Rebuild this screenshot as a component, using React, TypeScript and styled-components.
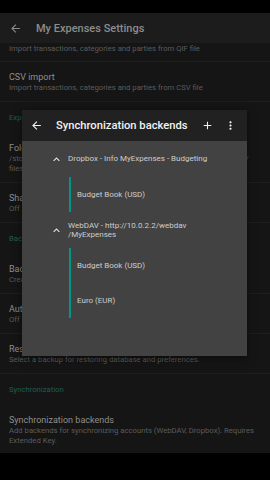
import styled, { createGlobalStyle } from 'styled-components';

const GlobalStyle = createGlobalStyle`
html, body {
    margin: 0;
    padding: 0;
    background: #000;
}
body {
    font-family: Roboto, "Noto Sans", sans-serif;
}
`;

const ArrowBack = ({ color }: { color: string }) => (
    <svg width="13" height="13" viewBox="0 0 24 24">
        <path fill={color} d="M20 11H7.83l5.59-5.59L12 4l-8 8 8 8 1.41-1.41L7.83 13H20v-2z" />
    </svg>
);

const AddIcon = () => (
    <svg width="13" height="13" viewBox="0 0 24 24">
        <path fill="#f2f2f2" d="M19 13h-6v6h-2v-6H5v-2h6V5h2v6h6v2z" />
    </svg>
);

const MoreIcon = () => (
    <svg width="13" height="13" viewBox="0 0 24 24">
        <path fill="#f2f2f2" d="M12 8c1.1 0 2-.9 2-2s-.9-2-2-2-2 .9-2 2 .9 2 2 2zm0 2c-1.1 0-2 .9-2 2s.9 2 2 2 2-.9 2-2-.9-2-2-2zm0 6c-1.1 0-2 .9-2 2s.9 2 2 2 2-.9 2-2-.9-2-2-2z" />
    </svg>
);

const ExpandLess = () => (
    <svg width="13" height="13" viewBox="0 0 24 24">
        <path fill="#e6e6e6" d="M12 8l-6 6 1.41 1.41L12 10.83l4.59 4.58L18 14z" />
    </svg>
);

type Pref = { title?: string; summary?: string[] };

const topPrefs: (Pref | { category: string })[] = [
    { summary: ['Import transactions, categories and parties from QIF file'] },
    { title: 'CSV import', summary: ['Import transactions, categories and parties from CSV file'] },
    { category: 'Export' },
    { title: 'Folder', summary: ['/storage/emulated/0/Android/data/org.totschnig.myexpenses.debug/', 'files'] },
    { title: 'Share', summary: ['Off'] },
    { category: 'Backup / Restore' },
    { title: 'Backup', summary: ['Create a backup of database and preferences'] },
    { title: 'Auto backup', summary: ['Off'] },
    { title: 'Restore', summary: ['Select a backup for restoring database and preferences.'] },
    { category: 'Synchronization' },
];

const backends = [
    { name: ['Dropbox - Info MyExpenses - Budgeting'], accounts: ['Budget Book (USD)'] },
    { name: ['WebDAV - http://10.0.2.2/webdav', '/MyExpenses'], accounts: ['Budget Book (USD)', 'Euro (EUR)'] },
];

export default function App() {
    return (
        <>
            <GlobalStyle />
            <Screen>
                <StatusBar />
                <Toolbar>
                    <ArrowBack color="#8a8a8a" />
                    <ToolbarTitle>My Expenses Settings</ToolbarTitle>
                </Toolbar>
                <PrefList>
                    {topPrefs.map((p, i) =>
                        'category' in p ? (
                            <Category key={i}>{p.category}</Category>
                        ) : (
                            <PrefRow key={i} $partial={!p.title}>
                                {p.title && <PrefTitle>{p.title}</PrefTitle>}
                                {p.summary?.map((s, j) => <PrefSummary key={j}>{s}</PrefSummary>)}
                            </PrefRow>
                        )
                    )}
                    <PrefRow $last>
                        <PrefTitle>Synchronization backends</PrefTitle>
                        <PrefSummary $wrap>
                            Add backends for synchronizing accounts (WebDAV, Dropbox). Requires Extended Key.
                        </PrefSummary>
                    </PrefRow>
                </PrefList>
                <NavBar />

                <Dialog>
                    <DialogBar>
                        <IconBox $width={26}><ArrowBack color="#f2f2f2" /></IconBox>
                        <DialogTitle>Synchronization backends</DialogTitle>
                        <IconBox $width={23}><AddIcon /></IconBox>
                        <IconBox $width={23}><MoreIcon /></IconBox>
                    </DialogBar>
                    <DialogBody>
                        {backends.map((b, i) => (
                            <div key={i}>
                                <GroupHeader>
                                    <ExpandLess />
                                    <GroupName>
                                        {b.name.map((n, j) => <div key={j}>{n}</div>)}
                                    </GroupName>
                                </GroupHeader>
                                <AccountList>
                                    {b.accounts.map((a, j) => <Account key={j}>{a}</Account>)}
                                </AccountList>
                            </div>
                        ))}
                    </DialogBody>
                </Dialog>
            </Screen>
        </>
    );
}

const Screen = styled.div`
position: relative;
width: 270px;
height: 480px;
display: flex;
flex-direction: column;
overflow: hidden;
background: #151515;
`;

const StatusBar = styled.div`
flex-shrink: 0;
height: 13px;
background: #000;
`;

const Toolbar = styled.div`
flex-shrink: 0;
height: 30px;
display: flex;
align-items: center;
gap: 14px;
padding-left: 9px;
background: #1c1c1c;
`;

const ToolbarTitle = styled.div`
color: #8c8c8c;
font-size: 11px;
font-weight: 500;
`;

const PrefList = styled.div`
flex: 1;
min-height: 0;
display: flex;
flex-direction: column;
overflow: hidden;
`;

const PrefRow = styled.div<{ $partial?: boolean; $last?: boolean }>`
flex-shrink: 0;
padding: ${p => (p.$partial ? '1px 9px 7px' : '9px 9px 8px')};
border-bottom: 1px solid ${p => (p.$last ? 'transparent' : '#1e1e1e')};
`;

const PrefTitle = styled.div`
color: #8e8e8e;
font-size: 9px;
line-height: 12px;
white-space: nowrap;
`;

const PrefSummary = styled.div<{ $wrap?: boolean }>`
color: #5c5c5c;
font-size: 7.7px;
line-height: 10px;
white-space: ${p => (p.$wrap ? 'normal' : 'nowrap')};
`;

const Category = styled.div`
flex-shrink: 0;
height: 31px;
display: flex;
align-items: center;
padding-left: 9px;
color: #1f5d54;
font-size: 7.7px;
`;

const NavBar = styled.div`
flex-shrink: 0;
height: 27px;
background: #000;
`;

const Dialog = styled.div`
position: absolute;
left: 22px;
top: 110px;
width: 225px;
height: 246px;
display: flex;
flex-direction: column;
background: #424242;
box-shadow: 0 2px 8px rgba(0, 0, 0, 0.5);
`;

const DialogBar = styled.div`
height: 31px;
display: flex;
align-items: center;
padding: 0 5px 0 8px;
background: #212121;
`;

const IconBox = styled.div<{ $width: number }>`
width: ${p => p.$width}px;
display: flex;
justify-content: center;
&:first-child {
    justify-content: flex-start;
}
`;

const DialogTitle = styled.div`
flex: 1;
color: #f2f2f2;
font-size: 11.2px;
font-weight: 500;
white-space: nowrap;
`;

const DialogBody = styled.div`
flex: 1;
`;

const GroupHeader = styled.div`
height: 36px;
display: flex;
align-items: center;
gap: 5px;
padding-left: 28px;
`;

const GroupName = styled.div`
color: #cdcdcd;
font-size: 8px;
line-height: 9.5px;
`;

const AccountList = styled.div`
margin-left: 47px;
border-left: 2px solid #009688;
`;

const Account = styled.div`
height: 35px;
display: flex;
align-items: center;
padding-left: 6px;
color: #cdcdcd;
font-size: 8px;
`;
